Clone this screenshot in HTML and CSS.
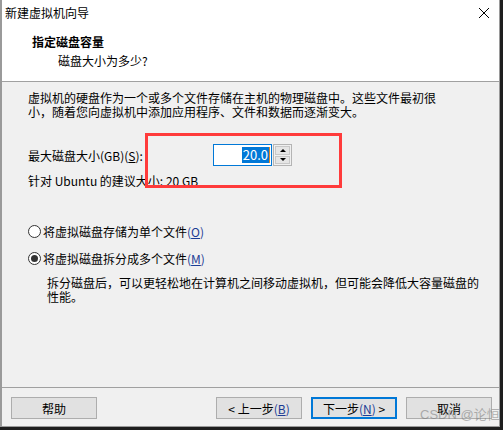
FILE: index.html
```html
<!DOCTYPE html>
<html lang="zh-CN">
  <head>
    <meta charset="UTF-8" />
    <meta name="viewport" content="width=device-width, initial-scale=1.0" />
    <title>新建虚拟机向导</title>
    <link rel="stylesheet" href="styles.css">
  </head>
  <body>
    <div class="window">
      <div class="top">
        <div class="titlebar">
          <span class="title">新建虚拟机向导</span>
          <svg class="close" width="12" height="12" viewBox="0 0 12 12">
            <path d="M1 1 L11 11 M11 1 L1 11" stroke="#000" stroke-width="1" fill="none" />
          </svg>
        </div>
        <div class="header">
          <div class="heading">指定磁盘容量</div>
          <div class="subheading">磁盘大小为多少?</div>
        </div>
      </div>

      <div class="content">
        <p class="intro">虚拟机的硬盘作为一个或多个文件存储在主机的物理磁盘中。这些文件最初很小，随着您向虚拟机中添加应用程序、文件和数据而逐渐变大。</p>

        <div class="size-row">
          <label class="size-label" for="size">最大磁盘大小(GB)(<u>S</u>):</label>
          <div class="spin-input" id="size"><span class="selected">20.0</span></div>
          <div class="spin-buttons">
            <div class="spin-btn"><span class="arrow-up"></span></div>
            <div class="spin-btn"><span class="arrow-down"></span></div>
          </div>
        </div>
        <div class="hint">针对 Ubuntu 的建议大小: 20 GB</div>

        <div class="options">
          <div class="radio-row">
            <span class="radio"></span>
            <span>将虚拟磁盘存储为单个文件<span class="key">(<u>O</u>)</span></span>
          </div>
          <div class="radio-row">
            <span class="radio checked"></span>
            <span>将虚拟磁盘拆分成多个文件<span class="key">(<u>M</u>)</span></span>
          </div>
          <p class="option-note">拆分磁盘后，可以更轻松地在计算机之间移动虚拟机，但可能会降低大容量磁盘的性能。</p>
        </div>
      </div>

      <div class="footer">
        <button class="btn">帮助</button>
        <div class="spacer"></div>
        <button class="btn">&lt; 上一步<span class="key">(<u>B</u>)</span></button>
        <button class="btn primary">下一步<span class="key">(<u>N</u>)</span> &gt;</button>
        <button class="btn">取消</button>
        <span class="watermark">CSDN @论恒</span>
      </div>

      <div class="highlight"></div>
    </div>
  </body>
</html>
```

FILE: styles.css
```css
body {
  margin: 0;
  background: #1e1e1e;
  font-family: "Noto Sans CJK SC", "Microsoft YaHei", sans-serif;
  font-size: 12px;
  color: #000;
}
.window {
  position: relative;
  box-sizing: border-box;
  width: 500px;
  height: 427px;
  display: flex;
  flex-direction: column;
  background: #f0f0f0;
  border-left: 2px solid #9a9a9a;
  border-right: 1px solid #9a9a9a;
  border-bottom: 1px solid #9a9a9a;
}
.top {
  background: #fff;
  height: 81px;
  border-bottom: 1px solid #a0a0a0;
}
.titlebar {
  height: 26px;
  display: flex;
  align-items: center;
  justify-content: space-between;
  padding: 0 9px 0 3px;
}
.title {
  line-height: 26px;
}
.header {
  padding: 7px 0 0 30px;
}
.heading {
  font-weight: bold;
  line-height: 18px;
}
.subheading {
  line-height: 20px;
  padding-left: 26px;
}
.content {
  flex: 1;
  padding: 9px 0 0 26px;
}
.intro {
  margin: 0;
  width: 412px;
  line-height: 14px;
}
.size-row {
  display: flex;
  align-items: center;
  margin-top: 25px;
  height: 22px;
}
.size-label {
  width: 185px;
}
.spin-input {
  box-sizing: border-box;
  width: 59px;
  height: 22px;
  border: 1px solid #0078d7;
  background: #fff;
  display: flex;
  align-items: center;
  justify-content: flex-end;
  padding-right: 1px;
}
.selected {
  background: #0078d7;
  color: #fff;
  font-size: 13px;
  line-height: 16px;
  padding: 0 1px;
  border-right: 1px solid #e2861c;
}
.spin-buttons {
  box-sizing: border-box;
  width: 19px;
  height: 22px;
  margin-left: 1px;
  border: 1px solid #b4b4b4;
  background: #f0f0f0;
  display: flex;
  flex-direction: column;
  gap: 1px;
  padding: 1px;
}
.spin-btn {
  flex: 1;
  background: #e5e5e5;
  border: 1px solid #c8c8c8;
  display: flex;
  align-items: center;
  justify-content: center;
}
.arrow-up {
  border-left: 3px solid transparent;
  border-right: 3px solid transparent;
  border-bottom: 3px solid #000;
}
.arrow-down {
  border-left: 3px solid transparent;
  border-right: 3px solid transparent;
  border-top: 3px solid #000;
}
.hint {
  margin-top: 8px;
  line-height: 14px;
}
.options {
  margin-top: 35px;
}
.radio-row {
  display: flex;
  align-items: center;
  height: 16px;
  margin-bottom: 11px;
}
.radio {
  box-sizing: border-box;
  width: 13px;
  height: 13px;
  border: 1px solid #333;
  border-radius: 50%;
  background: #fff;
  margin-right: 2px;
  display: flex;
  align-items: center;
  justify-content: center;
}
.radio.checked::after {
  content: "";
  width: 7px;
  height: 7px;
  border-radius: 50%;
  background: #333;
}
.key {
  color: #1c3c94;
}
.option-note {
  margin: -1px 0 0 19px;
  width: 436px;
  line-height: 14px;
}
.footer {
  position: relative;
  height: 39px;
  border-top: 1px solid #a0a0a0;
  box-sizing: border-box;
  padding: 9px 7px 0 9px;
  display: flex;
  align-items: flex-start;
  gap: 9px;
}
.spacer {
  flex: 1;
}
.btn {
  box-sizing: border-box;
  width: 86px;
  height: 22px;
  padding: 0;
  background: #e1e1e1;
  border: 1px solid #adadad;
  font-family: inherit;
  font-size: 12px;
  color: #000;
}
.btn.primary {
  border: 2px solid #0078d7;
}
.watermark {
  position: absolute;
  left: 418px;
  top: 16px;
  white-space: nowrap;
  font-family: "Liberation Sans", "Noto Sans CJK SC", sans-serif;
  font-size: 13px;
  color: rgba(120, 120, 120, 0.55);
}
.highlight {
  position: absolute;
  left: 143px;
  top: 133px;
  width: 197px;
  height: 55px;
  box-sizing: border-box;
  border: 3px solid #ff3b3b;
}
```
